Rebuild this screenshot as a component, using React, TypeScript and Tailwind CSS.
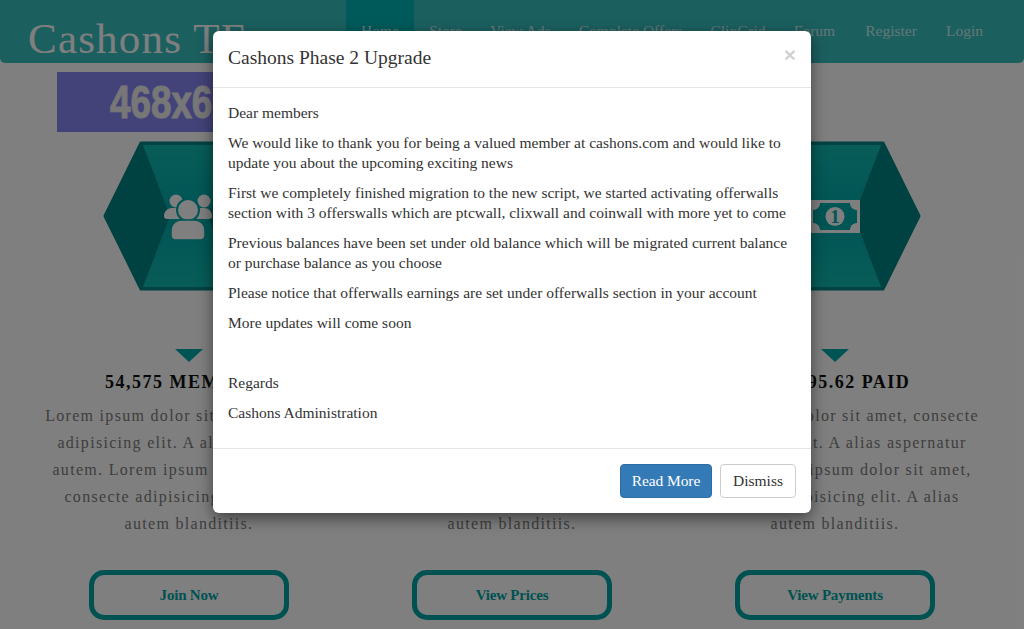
const serif = "font-['Liberation_Serif','Times_New_Roman',serif]";

const navLinks = [
  { label: "Home", width: "w-[68px]", active: true },
  { label: "Store", width: "w-[63px]" },
  { label: "View Ads", width: "w-[87px]" },
  { label: "Complete Offers", width: "w-[133px]" },
  { label: "ClixGrid", width: "w-[82px]" },
  { label: "Forum", width: "w-[71px]" },
  { label: "Register", width: "w-[82px]" },
  { label: "Login", width: "w-[65px]" },
];

const lorem = [
  "Lorem ipsum dolor sit amet, consecte",
  "adipisicing elit. A alias aspernatur",
  "autem. Lorem ipsum dolor sit amet,",
  "consecte adipisicing elit. A alias",
  "autem blanditiis.",
];

function UsersIcon() {
  return (
    <g fill="#fff">
      <circle cx="73" cy="60" r="6.5" />
      <circle cx="101" cy="60" r="6.5" />
      <path d="M61 75c0-5 4-8 8-8h32c4 0 8 3 8 8 0 2-1 3-3 3H64c-2 0-3-1-3-3z" />
      <circle cx="85" cy="69" r="12" fill="#00aaaa" />
      <circle cx="85" cy="69" r="10" />
      <path d="M68 90c0-8 6-11 11-11h12c5 0 11 3 11 11v5c0 2-2 4-4 4H72c-2 0-4-2-4-4z" stroke="#00aaaa" strokeWidth="1.5" />
    </g>
  );
}

function CheckIcon() {
  return <path d="M65 76l14 14 28-30" fill="none" stroke="#fff" strokeWidth="9" />;
}

function MoneyIcon() {
  return (
    <g>
      <rect x="61" y="59" width="50" height="33" fill="#fff" />
      <path d="M71 62h30c0 4 3 7 7 7v13c-4 0-7 3-7 7H71c0-4-3-7-7-7V69c4 0 7-3 7-7z" fill="#00aaaa" />
      <circle cx="86" cy="75.5" r="9.5" fill="#fff" />
      <text x="86" y="82" textAnchor="middle" fontSize="19" fontWeight="700" fontFamily="Liberation Serif, serif" fill="#00aaaa">
        1
      </text>
    </g>
  );
}

function Hexagon({ children }: { children: React.ReactNode }) {
  return (
    <svg width="172" height="150" viewBox="0 0 172 150">
      <defs>
        <linearGradient id="hexTop" x1="0" y1="0" x2="0" y2="1">
          <stop offset="0" stopColor="#10bab2" />
          <stop offset="1" stopColor="#00a8a8" />
        </linearGradient>
        <linearGradient id="hexBottom" x1="0" y1="1" x2="0" y2="0">
          <stop offset="0" stopColor="#10bab2" />
          <stop offset="1" stopColor="#00a8a8" />
        </linearGradient>
      </defs>
      <path d="M38 2h96l36 73-36 73H38L2 75z" fill="#008484" stroke="#008484" strokeWidth="3" strokeLinejoin="round" />
      <path d="M40 4h92l-27 71H67z" fill="url(#hexTop)" />
      <path d="M40 146h92l-27-71H67z" fill="url(#hexBottom)" />
      {children}
    </svg>
  );
}

function FeatureColumn({
  icon,
  heading,
  button,
}: {
  icon: React.ReactNode;
  heading: string;
  button: string;
}) {
  return (
    <div className="flex flex-col items-center">
      <Hexagon>{icon}</Hexagon>
      <div className="mt-[58px] h-0 w-0 border-x-[14px] border-t-[13px] border-x-transparent border-t-[#00a8a8]" />
      <h3 className="mt-[7px] h-[26px] text-[18px] font-bold leading-[26px] tracking-[1.5px] whitespace-nowrap text-[#111]">
        {heading}
      </h3>
      <p className="mt-[7px] text-center text-[16px] leading-[27px] tracking-[1.3px] whitespace-nowrap text-[#7c7c7c]">
        {lorem.map((line) => (
          <span key={line} className="block">
            {line}
          </span>
        ))}
      </p>
      <a className="mt-[33px] flex h-[50px] w-[200px] items-center justify-center rounded-[15px] border-[5px] border-[#00a4a4] bg-transparent text-[15px] font-bold tracking-[-0.2px] text-[#00a4a4]">
        {button}
      </a>
    </div>
  );
}

export default function App() {
  return (
    <div className={`relative h-screen w-full overflow-hidden bg-white ${serif}`}>
      <header className="flex h-[63px] justify-between rounded-b-[5px] bg-[#39bebe] pr-[27px] pl-[28px]">
        <a className="pt-[11px] text-[43px] leading-[55px] tracking-[1.2px] text-white">Cashons TE</a>
        <nav className="flex">
          {navLinks.map((link) => (
            <a
              key={link.label}
              className={`flex h-full justify-center pt-[21px] text-[15.5px] leading-5 whitespace-nowrap text-[#c8eeee] ${link.width} ${
                link.active ? "bg-[#00b4b4]" : ""
              }`}
            >
              {link.label}
            </a>
          ))}
        </nav>
      </header>

      <div className="mt-[9px] ml-[57px] flex h-[60px] w-[468px] items-center bg-[#8686f4] pl-[53px]">
        <span className="inline-block origin-left scale-x-[0.8] font-['Liberation_Sans',sans-serif] text-[46px] font-bold text-[#eee] [-webkit-text-stroke:1px_#eee]">
          468x60
        </span>
      </div>

      <div className="mt-[9px] grid grid-cols-3 px-[27.5px]">
        <FeatureColumn icon={<UsersIcon />} heading="54,575 MEMBERS" button="Join Now" />
        <FeatureColumn icon={<CheckIcon />} heading="PREMIUM" button="View Prices" />
        <FeatureColumn icon={<MoneyIcon />} heading="$54,095.62 PAID" button="View Payments" />
      </div>

      {/* modal backdrop */}
      <div className="absolute inset-0 bg-black/50" />

      <div className="absolute top-[31px] left-[213px] w-[598px] rounded-[6px] bg-white text-[15.5px] leading-5 text-[#333] shadow-[0_5px_15px_rgba(0,0,0,0.5)]">
        <div className="flex h-[57px] items-start justify-between border-b border-[#e5e5e5] pt-[15px] pr-[15px] pl-[15px]">
          <h4 className="text-[19.5px] leading-6">Cashons Phase 2 Upgrade</h4>
          <button className="font-['Liberation_Sans',sans-serif] text-[21px] leading-[18px] font-bold text-black/20">×</button>
        </div>
        <div className="h-[360px] px-[15px] pt-[15px]">
          <p className="mb-[10px]">Dear members</p>
          <p className="mb-[10px]">
            We would like to thank you for being a valued member at cashons.com and would like to
            <br />
            update you about the upcoming exciting news
          </p>
          <p className="mb-[10px]">
            First we completely finished migration to the new script, we started activating offerwalls
            <br />
            section with 3 offerswalls which are ptcwall, clixwall and coinwall with more yet to come
          </p>
          <p className="mb-[10px]">
            Previous balances have been set under old balance which will be migrated current balance
            <br />
            or purchase balance as you choose
          </p>
          <p className="mb-[10px]">Please notice that offerwalls earnings are set under offerwalls section in your account</p>
          <p className="mb-[10px]">More updates will come soon</p>
          <p className="mb-[10px]">&nbsp;</p>
          <p className="mb-[10px]">Regards</p>
          <p>Cashons Administration</p>
        </div>
        <div className="flex justify-end gap-2 border-t border-[#e5e5e5] p-[15px]">
          <button className="h-[34px] w-[92px] rounded border border-[#2e6da4] bg-[#337ab7] tracking-[-0.1px] text-white">Read More</button>
          <button className="h-[34px] w-[76px] rounded border border-[#ccc] bg-white text-[#333]">Dismiss</button>
        </div>
      </div>
    </div>
  );
}
